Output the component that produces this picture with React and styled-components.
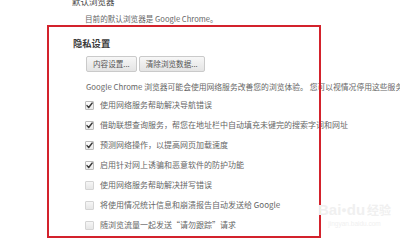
import styled, { createGlobalStyle } from "styled-components";

const GlobalStyle = createGlobalStyle`
  html, body {
    margin: 0;
    padding: 0;
    background: #ffffff;
    font-family: "Noto Sans CJK SC", "Noto Sans", sans-serif;
    overflow: hidden;
  }
`;

const rows = [
  { label: "使用网络服务帮助解决导航错误", checked: true },
  { label: "借助联想查询服务，帮您在地址栏中自动填充未键完的搜索字词和网址", checked: true },
  { label: "预测网络操作，以提高网页加载速度", checked: true },
  { label: "启用针对网上诱骗和恶意软件的防护功能", checked: true },
  { label: "使用网络服务帮助解决拼写错误", checked: false },
  { label: "将使用情况统计信息和崩溃报告自动发送给 Google", checked: false },
  { label: "随浏览流量一起发送“请勿跟踪”请求", checked: false },
];

const Check = ({ checked }) => (
  <Box checked={checked}>
    {checked && (
      <svg width="9" height="9" viewBox="0 0 9 9">
        <path
          d="M2 4.6 L3.7 6.5 L7.2 2"
          fill="none"
          stroke="#3a3a3a"
          strokeWidth="1.4"
          strokeLinecap="round"
          strokeLinejoin="round"
        />
      </svg>
    )}
  </Box>
);

const App = () => {
  return (
    <Page>
      <GlobalStyle />
      <DefaultBrowser>
        <Title>默认浏览器</Title>
        <Note>目前的默认浏览器是 Google Chrome。</Note>
      </DefaultBrowser>
      <Privacy>
        <Heading>隐私设置</Heading>
        <Content>
          <Buttons>
            <Button>内容设置...</Button>
            <Button>清除浏览数据...</Button>
          </Buttons>
          <Intro>
            Google Chrome 浏览器可能会使用网络服务改善您的浏览体验。 您可以视情况停用这些服务。
          </Intro>
          <List>
            {rows.map((row, index) => (
              <Row key={index}>
                <Check checked={row.checked} />
                <Label>{row.label}</Label>
              </Row>
            ))}
          </List>
        </Content>
      </Privacy>
      <Watermark>
        <Logo>
          Bai<Paw>●</Paw>du<LogoCn>经验</LogoCn>
        </Logo>
        <LogoUrl>jingyan.baidu.com</LogoUrl>
      </Watermark>
    </Page>
  );
};

export default App;

const Page = styled.div`
  position: relative;
  width: 400px;
  height: 246px;
  padding-left: 47px;
  box-sizing: border-box;
  overflow: hidden;
`;

const DefaultBrowser = styled.div`
  margin-left: 25px;
  margin-top: -5px;
`;

const Title = styled.div`
  font-size: 8.5px;
  line-height: 12px;
  height: 12px;
  color: #444;
`;

const Note = styled.div`
  margin-top: 6px;
  padding-left: 13px;
  font-size: 7.6px;
  line-height: 12px;
  height: 12px;
  color: #666;
  white-space: nowrap;
`;

const Privacy = styled.section`
  position: relative;
  width: 274px;
  height: 213px;
  box-sizing: border-box;
  padding: 9px 0 0 24px;
  border: 2px solid transparent;

  &::after {
    content: "";
    position: absolute;
    inset: -2px;
    border: 2px solid #d3222c;
    pointer-events: none;
  }
`;

const Heading = styled.h2`
  margin: 0;
  font-size: 9.3px;
  line-height: 14px;
  height: 14px;
  font-weight: 600;
  color: #3a3a3a;
`;

const Content = styled.div`
  padding-left: 13px;
`;

const Buttons = styled.div`
  display: flex;
  gap: 2px;
  margin-top: 6px;
`;

const Button = styled.button`
  height: 16px;
  padding: 0 6px;
  border: 1px solid #cacaca;
  border-radius: 2px;
  background: linear-gradient(#f7f7f7, #e4e4e4);
  font-family: inherit;
  font-size: 7.6px;
  line-height: 14px;
  color: #555;
  white-space: nowrap;
`;

const Intro = styled.div`
  margin-top: 9px;
  font-size: 7.8px;
  line-height: 12px;
  height: 12px;
  color: #666;
  white-space: nowrap;
`;

const List = styled.div`
  margin-top: 2px;
  display: flex;
  flex-direction: column;
  margin-left: -1px;
`;

const Row = styled.div`
  display: flex;
  align-items: center;
  gap: 6px;
  height: 20px;
`;

const Box = styled.span`
  display: flex;
  align-items: center;
  justify-content: center;
  width: 9px;
  height: 9px;
  box-sizing: border-box;
  border: 1px solid ${(p) => (p.checked ? "#bcbcbc" : "#d4d4d4")};
  border-radius: 1px;
  background: ${(p) =>
    p.checked ? "linear-gradient(#ffffff, #e8e8e8)" : "linear-gradient(#f6f6f6, #e6e6e6)"};
  flex: none;

  svg {
    flex: none;
  }
`;

const Label = styled.span`
  font-size: 8px;
  line-height: 12px;
  color: #666;
  white-space: nowrap;
`;

const Watermark = styled.div`
  position: absolute;
  left: 318px;
  top: 200px;
  display: flex;
  flex-direction: column;
  align-items: center;
  color: #f0f0f0;
  pointer-events: none;
`;

const Logo = styled.div`
  font-family: "Liberation Sans", sans-serif;
  font-size: 15px;
  line-height: 20px;
  font-weight: bold;
  white-space: nowrap;
`;

const Paw = styled.span`
  font-size: 9px;
  vertical-align: top;
`;

const LogoCn = styled.span`
  font-family: "Noto Sans CJK SC", sans-serif;
  font-size: 12px;
  margin-left: 2px;
`;

const LogoUrl = styled.div`
  font-family: "Liberation Sans", sans-serif;
  font-size: 6.5px;
  line-height: 8px;
  white-space: nowrap;
`;
